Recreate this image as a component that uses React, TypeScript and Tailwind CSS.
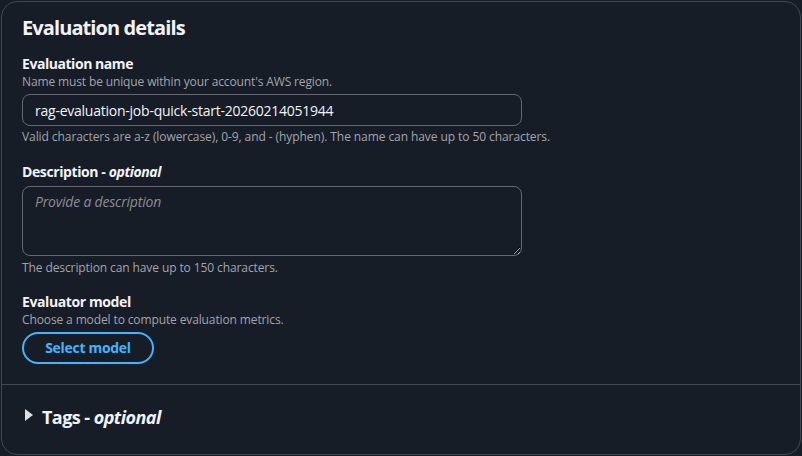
export default function App() {
  return (
    <div
      className="w-[802px] h-[456px] bg-[#161d26] p-px text-[#dedee3]"
      style={{ fontFamily: '"Open Sans", "Noto Sans", sans-serif' }}
    >
      <div className="h-[454px] w-[800px] rounded-2xl border border-[#424650] bg-[#161d26] flex flex-col">
        <div className="px-5 pt-[14px] pb-5 border-b border-[#424650]">
          <h2 className="text-[20px] leading-6 font-bold tracking-[-0.9px] text-[#f3f3f7]">Evaluation details</h2>

          <div className="mt-[14px]">
            <div className="text-sm leading-5 font-bold tracking-[-0.45px] text-[#f3f3f7]">Evaluation name</div>
            <div className="text-xs leading-4 tracking-[-0.13px] text-[#a4a4ad]">
              Name must be unique within your account&apos;s AWS region.
            </div>
            <input
              className="mt-1 h-8 w-[500px] rounded-lg border border-[#656871] bg-[#161d26] px-3 text-sm tracking-[-0.24px] text-[#f3f3f7] outline-none"
              defaultValue="rag-evaluation-job-quick-start-20260214051944"
            />
            <div className="mt-[3px] text-xs leading-4 tracking-[-0.08px] text-[#a4a4ad]">
              Valid characters are a-z (lowercase), 0-9, and - (hyphen). The name can have up to 50 characters.
            </div>
          </div>

          <div className="mt-[17px]">
            <div className="text-sm leading-5 font-bold tracking-[-0.4px] text-[#f3f3f7]">
              Description - <i>optional</i>
            </div>
            <textarea
              className="mt-1 block h-[70px] w-[500px] rounded-lg border border-[#656871] bg-[#161d26] px-3 py-[5px] text-sm leading-5 tracking-[-0.2px] text-[#f3f3f7] outline-none placeholder:italic placeholder:text-[#8c8c94]"
              placeholder="Provide a description"
            />
            <div className="mt-1 text-xs leading-4 tracking-[-0.1px] text-[#a4a4ad]">
              The description can have up to 150 characters.
            </div>
          </div>

          <div className="mt-4">
            <div className="text-sm leading-5 font-bold tracking-[-0.4px] text-[#f3f3f7]">Evaluator model</div>
            <div className="text-xs leading-4 tracking-[-0.12px] text-[#a4a4ad]">Choose a model to compute evaluation metrics.</div>
            <button className="mt-1 h-8 w-[132px] rounded-full border-2 border-[#42b4ff] text-sm font-bold tracking-[-0.3px] text-[#42b4ff]">
              Select model
            </button>
          </div>
        </div>

        <div className="px-5 pt-5 flex items-center gap-[9px]">
          <svg width="8" height="12" viewBox="0 0 8 12" className="ml-[3px] -mt-[4px]">
            <path d="M0 0 L8 6 L0 12 Z" fill="#dedee3" />
          </svg>
          <div className="text-[18px] leading-6 font-bold tracking-[-0.55px] text-[#f3f3f7]">
            Tags - <i>optional</i>
          </div>
        </div>
      </div>
    </div>
  );
}
